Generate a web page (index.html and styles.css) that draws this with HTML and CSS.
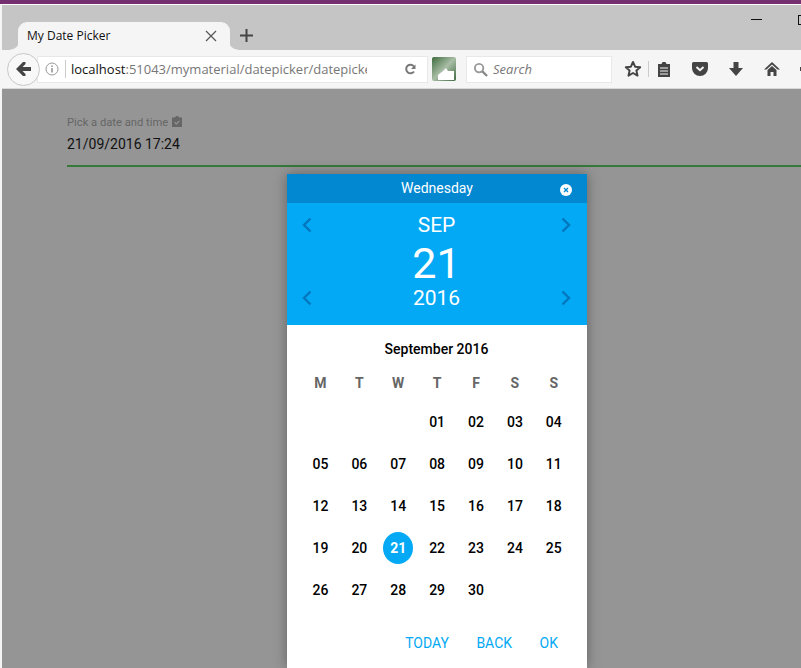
FILE: index.html
```html
<!DOCTYPE html>
<html lang="en">
<head>
    <meta charset="UTF-8">
    <title>My Date Picker</title>
    <link rel="stylesheet" href="styles.css">
</head>
<body>
    <div class="titlebar"></div>
    <div class="browser">
        <div class="tabstrip">
            <div class="tab">
                <span class="tab-title">My Date Picker</span>
                <svg class="tab-close" width="12" height="12" viewBox="0 0 12 12"><path d="M1 1l10 10M11 1L1 11" stroke="#555" stroke-width="1.2" fill="none"/></svg>
            </div>
            <svg class="new-tab" width="13" height="13" viewBox="0 0 13 13"><path d="M6.500 0v13M0 6.500h13" stroke="#444" stroke-width="2" fill="none"/></svg>
            <div class="window-btns">
                <span class="win-min"></span>
                <span class="win-max"></span>
            </div>
        </div>
        <div class="toolbar">
            <div class="back-btn">
                <svg width="15" height="14" viewBox="0 0 15 14"><path d="M7 0h2.500v2L6.500 5H15v4H6.500l3 3v2H7L0 7z" fill="#444"/></svg>
            </div>
            <div class="urlbar">
                <svg class="info" width="14" height="14" viewBox="0 0 14 14"><circle cx="7" cy="7" r="6" stroke="#999" stroke-width="1" fill="none"/><path d="M7 6v4.500M7 3.500v1.500" stroke="#888" stroke-width="1.400"/></svg>
                <span class="url-sep"></span>
                <span class="url"><span class="url-host">localhost</span>:51043/mymaterial/datepicker/datepicke</span>
                <svg class="reload" width="12" height="12" viewBox="0 0 12 12"><path d="M10 3.500A4.300 4.300 0 1 0 10 8.500" stroke="#777" stroke-width="2" fill="none"/><path d="M11.500 1.500v4.500h-4.500z" fill="#777"/></svg>
            </div>
            <div class="addon-icon">
                <svg width="24" height="24" viewBox="0 0 24 24"><defs><linearGradient id="addon" x1="0" y1="0" x2="1" y2="1"><stop offset="0" stop-color="#3d6b3d"/><stop offset="0.500" stop-color="#a9bda6"/><stop offset="1" stop-color="#3f6a40"/></linearGradient></defs><rect width="24" height="24" rx="2" fill="url(#addon)"/><path d="M6 23v-5l5-4 3-3 2 3h6v9z" fill="#fff"/></svg>
            </div>
            <div class="searchbar">
                <svg width="15" height="15" viewBox="0 0 16 16"><circle cx="6.500" cy="6.500" r="4.500" stroke="#999" stroke-width="2" fill="none"/><path d="M10 10l5 5" stroke="#888" stroke-width="2.400"/></svg>
                <span class="search-text">Search</span>
            </div>
            <div class="tool-icons">
                <svg class="ic-star" width="18" height="18" viewBox="0 0 18 18"><path d="M9 2l2.100 4.700 5.100.5-3.800 3.400 1.100 5L9 13l-4.500 2.600 1.100-5L1.800 7.200l5.100-.5z" stroke="#444" stroke-width="2" fill="none" stroke-linejoin="round"/></svg>
                <span class="tool-sep"></span>
                <svg class="ic-list" width="14" height="16" viewBox="0 0 14 16"><path d="M1 3h3.500l1-2h3l1 2H13v13H1z" fill="#444"/><path d="M3 7h8M3 10h8M3 13h8" stroke="#f5f5f5" stroke-width="1.200"/></svg>
                <svg class="ic-pocket" width="16" height="14" viewBox="0 0 16 14"><path d="M1.500 0h13A1.500 1.500 0 0 1 16 1.500V6a8 8 0 0 1-16 0V1.500A1.500 1.500 0 0 1 1.500 0z" fill="#444"/><path d="M4.500 5L8 8.200 11.500 5" stroke="#f5f5f5" stroke-width="2" fill="none"/></svg>
                <svg class="ic-down" width="14" height="14" viewBox="0 0 14 14"><path d="M4.500 0h5v6H14l-7 8-7-8h4.500z" fill="#444"/></svg>
                <svg class="ic-home" width="16" height="16" viewBox="0 0 16 16"><path d="M8 1L0 8.500h2.500L8 3.500l5.500 5H16z" fill="#444"/><path d="M3.500 9L8 5l4.500 4v6h-3v-4h-3v4h-3z" fill="#444"/></svg>
                <span class="ic-cut"></span>
            </div>
        </div>
    </div>

    <main class="page">
        <div class="field">
            <label class="field-label">Pick a date and time
                <svg class="label-icon" width="10" height="11" viewBox="0 0 10 11"><path d="M0 1.500h3L4 0h2l1 1.500h3V11H0z" fill="#666"/><path d="M2.500 6.200l1.800 1.800 3.200-3.200" stroke="#959595" stroke-width="1.200" fill="none"/></svg>
            </label>
            <div class="field-value">21/09/2016 17:24</div>
        </div>
    </main>

    <div class="picker">
        <div class="picker-weekday">
            <span>Wednesday</span>
            <svg class="picker-close" width="12" height="12" viewBox="0 0 12 12"><circle cx="6" cy="6" r="6" fill="#fff"/><path d="M4 4l4 4M8 4l-4 4" stroke="#0288d1" stroke-width="1.300"/></svg>
        </div>
        <div class="picker-date">
            <div class="date-row month">
                <svg width="10" height="16" viewBox="0 0 10 16"><path d="M8.500 1.500L2 8l6.500 6.500" class="chev"/></svg>
                <span>SEP</span>
                <svg width="10" height="16" viewBox="0 0 10 16"><path d="M1.500 1.500L8 8l-6.500 6.500" class="chev"/></svg>
            </div>
            <div class="date-day">21</div>
            <div class="date-row year">
                <svg width="10" height="16" viewBox="0 0 10 16"><path d="M8.500 1.500L2 8l6.500 6.500" class="chev"/></svg>
                <span>2016</span>
                <svg width="10" height="16" viewBox="0 0 10 16"><path d="M1.500 1.500L8 8l-6.500 6.500" class="chev"/></svg>
            </div>
        </div>
        <div class="calendar">
            <div class="cal-title">September 2016</div>
            <div class="cal-grid">
                <span class="dow">M</span><span class="dow">T</span><span class="dow">W</span><span class="dow">T</span><span class="dow">F</span><span class="dow">S</span><span class="dow">S</span>
                <span></span><span></span><span></span>
                <span>01</span><span>02</span><span>03</span><span>04</span>
                <span>05</span><span>06</span><span>07</span><span>08</span><span>09</span><span>10</span><span>11</span>
                <span>12</span><span>13</span><span>14</span><span>15</span><span>16</span><span>17</span><span>18</span>
                <span>19</span><span>20</span><span class="selected">21</span><span>22</span><span>23</span><span>24</span><span>25</span>
                <span>26</span><span>27</span><span>28</span><span>29</span><span>30</span>
            </div>
            <div class="cal-actions">
                <span>TODAY</span>
                <span>BACK</span>
                <span>OK</span>
            </div>
        </div>
    </div>
</body>
</html>
```

FILE: styles.css
```css
html, body {
    height: 100%;
}
body {
    margin: 0;
    width: 801px;
    height: 668px;
    overflow: hidden;
    position: relative;
    display: flex;
    flex-direction: column;
    font-family: Roboto, sans-serif;
    background: #959595;
}
.titlebar {
    height: 4px;
    background: #74306f;
    border-bottom: 1px solid #fff;
    flex: none;
}
.browser {
    flex: none;
    border-left: 2px solid #f5f5f5;
    font-family: "Open Sans", sans-serif;
}
.tabstrip {
    height: 45px;
    background: #c5c5c5;
    display: flex;
    align-items: flex-end;
    padding-left: 16px;
    position: relative;
}
.tab {
    width: 212px;
    height: 28px;
    background: #f5f5f5;
    border-radius: 9px 9px 0 0;
    display: flex;
    align-items: center;
    justify-content: space-between;
    padding: 0 13px 1px 9px;
    box-sizing: border-box;
    font-size: 12px;
    color: #111;
    position: relative;
}
/* flared feet of the tab */
.tab::before, .tab::after {
    content: "";
    position: absolute;
    bottom: 0;
    width: 8px;
    height: 10px;
}
.tab::before {
    left: -8px;
    background: radial-gradient(circle at 0 0, #c5c5c5 9px, #f5f5f5 10px);
}
.tab::after {
    right: -8px;
    background: radial-gradient(circle at 100% 0, #c5c5c5 9px, #f5f5f5 10px);
}
.tab-close {
    flex: none;
}
.new-tab {
    margin: 0 0 8px 10px;
}
.window-btns {
    position: absolute;
    top: 14px;
    left: 749px;
    display: flex;
    gap: 36px;
}
.win-min {
    width: 11px;
    height: 1px;
    background: #111;
}
.win-max {
    width: 10px;
    height: 8px;
    margin-top: -4px;
    border: 1px solid #111;
}
.toolbar {
    height: 39px;
    background: #f5f5f5;
    border-bottom: 1px solid #d8d8d8;
    box-sizing: border-box;
    display: flex;
    align-items: center;
    padding-left: 5px;
}
.back-btn {
    width: 33px;
    height: 33px;
    border: 1px solid #c8c8c8;
    border-radius: 50%;
    background: #f8f8f8;
    box-sizing: border-box;
    display: flex;
    align-items: center;
    justify-content: center;
    flex: none;
    position: relative;
    z-index: 1;
}
.urlbar {
    width: 391px;
    height: 27px;
    margin-left: -3px;
    background: #fff;
    border: 1px solid #e8e8e8;
    box-sizing: border-box;
    display: flex;
    align-items: center;
    padding-left: 7px;
    flex: none;
}
.url-sep {
    width: 1px;
    height: 18px;
    margin: 0 5px 0 6px;
    background: #ccc;
}
.url {
    font-size: 13px;
    color: #777;
    width: 296px;
    white-space: nowrap;
    overflow: hidden;
}
.url-host {
    color: #111;
}
.reload {
    margin-left: 37px;
}
.addon-icon {
    margin-left: 4px;
    height: 24px;
    flex: none;
}
.searchbar {
    width: 146px;
    height: 27px;
    margin-left: 10px;
    background: #fff;
    border: 1px solid #e8e8e8;
    box-sizing: border-box;
    display: flex;
    align-items: center;
    gap: 5px;
    padding-left: 6px;
    flex: none;
}
.search-text {
    font-size: 13px;
    font-style: italic;
    color: #777;
}
.tool-icons {
    display: flex;
    align-items: center;
    margin-left: 12px;
    flex: none;
}
.tool-sep {
    width: 1px;
    height: 16px;
    margin: 0 8px 0 6px;
    background: #ccc;
}
.ic-pocket {
    margin-left: 21px;
}
.ic-down {
    margin-left: 21px;
}
.ic-home {
    margin-left: 21px;
}
.ic-cut {
    width: 4px;
    height: 4px;
    margin-left: 20px;
    background: #444;
}
.page {
    flex: 1;
    border-left: 2px solid #f5f5f5;
    padding: 27px 0 0 65px;
}
.field {
    border-bottom: 2px solid #357a38;
    height: 49px;
}
.field-label {
    display: flex;
    align-items: center;
    gap: 4px;
    font-size: 11.2px;
    line-height: 13px;
    color: #666;
}
.label-icon {
    margin-top: -2px;
}
.field-value {
    margin-top: 6px;
    font-size: 14px;
    line-height: 18px;
    color: #111;
}
.picker {
    position: absolute;
    left: 287px;
    top: 174px;
    width: 300px;
    box-shadow: 0 0 12px rgba(0, 0, 0, 0.35);
    color: #fff;
}
.picker-weekday {
    height: 29px;
    padding-bottom: 2px;
    box-sizing: border-box;
    background: #0288d1;
    display: flex;
    align-items: center;
    justify-content: center;
    font-size: 14px;
    position: relative;
}
.picker-close {
    position: absolute;
    top: 10px;
    left: 273px;
}
.picker-date {
    height: 122px;
    background: #03a9f4;
    text-align: center;
    padding: 10px 16px 0 15px;
    box-sizing: border-box;
}
.date-row {
    display: flex;
    align-items: center;
    justify-content: space-between;
    height: 24px;
}
.month {
    font-size: 21px;
}
.year {
    font-size: 21px;
    margin-top: 1px;
}
.date-day {
    font-size: 43px;
    line-height: 44px;
    margin-top: 4px;
}
.chev {
    stroke: #0277bd;
    stroke-width: 2.400;
    fill: none;
}
.calendar {
    background: #fff;
    color: #000;
    height: 343px;
    padding: 15px 13px 0 14px;
    box-sizing: border-box;
}
.cal-title {
    text-align: center;
    font-size: 14px;
    font-weight: 500;
    line-height: 18px;
    padding-right: 2px;
}
.cal-grid {
    display: grid;
    grid-template-columns: repeat(7, 38.9px);
    grid-template-rows: 39px;
    grid-auto-rows: 42px;
    margin-top: 4px;
    font-size: 14px;
    font-weight: 500;
    justify-items: center;
    align-items: center;
}
.dow {
    color: #666;
    font-weight: 700;
    margin-top: 3px;
}
.selected {
    width: 30px;
    height: 32px;
    border-radius: 50%;
    background: #03a9f4;
    color: #fff;
    font-weight: 700;
    display: flex;
    align-items: center;
    justify-content: center;
}
.cal-actions {
    display: flex;
    justify-content: flex-end;
    gap: 27.500px;
    margin-top: 24px;
    padding-right: 16px;
    font-size: 14px;
    line-height: 16px;
    color: #03a9f4;
}
```
